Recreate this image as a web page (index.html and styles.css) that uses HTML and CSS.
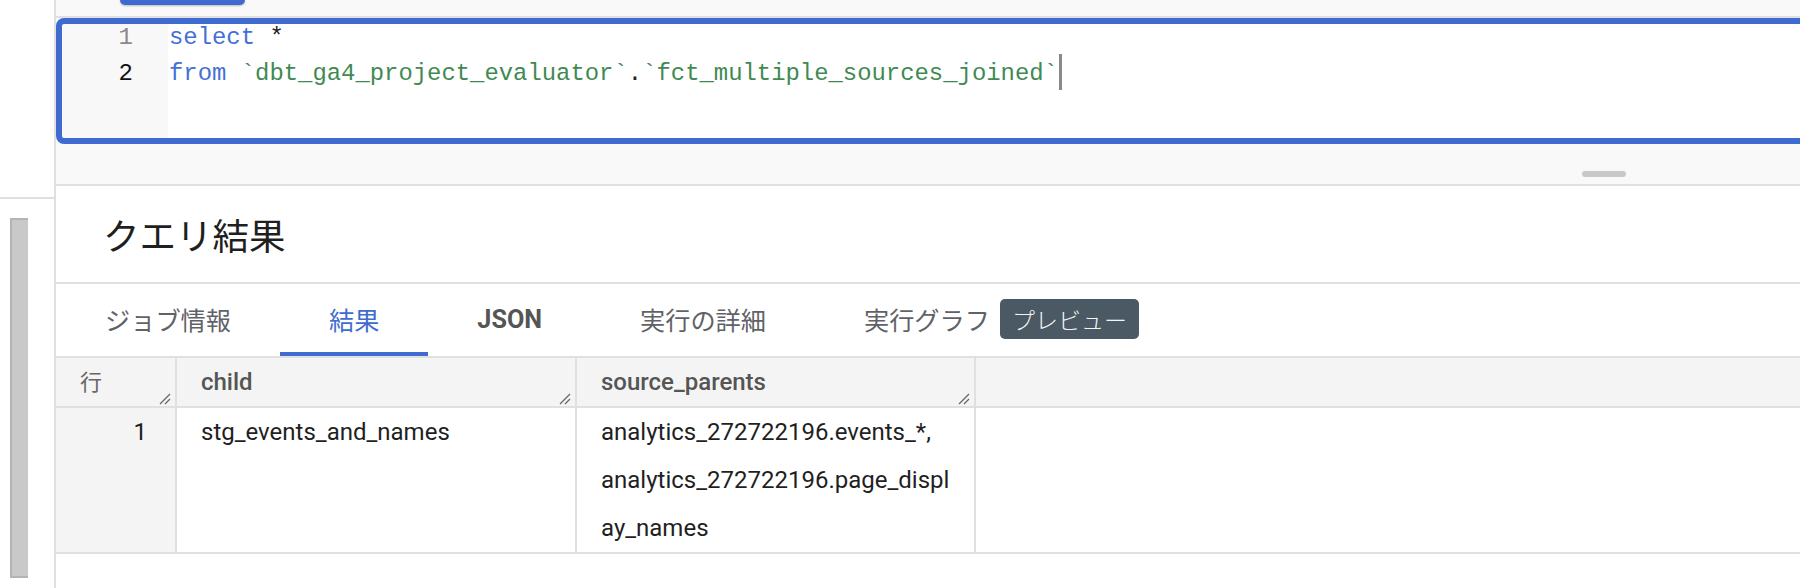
FILE: index.html
```html
<!DOCTYPE html>
<html lang="ja">
<head>
<meta charset="utf-8">
<title>クエリ結果</title>
<link rel="stylesheet" href="styles.css">
</head>
<body>
<div class="page">
  <aside class="sidebar">
    <div class="side-top"></div>
    <div class="side-scroll"><div class="scrollbar"></div></div>
  </aside>
  <main class="main">
    <div class="topbar"><div class="run-btn"></div></div>
    <div class="editor">
      <div class="gutter">
        <div class="ln">1</div>
        <div class="ln active">2</div>
      </div>
      <div class="code">
        <div class="cl"><span class="kw">select</span> <span class="op">*</span></div>
        <div class="cl"><span class="kw">from</span> <span class="str">`dbt_ga4_project_evaluator`</span><span class="op">.</span><span class="str">`fct_multiple_sources_joined`</span><span class="cursor"></span></div>
      </div>
    </div>
    <div class="editor-foot"><div class="handle"></div></div>
    <div class="title">クエリ結果</div>
    <nav class="tabs">
      <div class="tab">ジョブ情報</div>
      <div class="tab active">結果</div>
      <div class="tab bold">JSON</div>
      <div class="tab">実行の詳細</div>
      <div class="tab">実行グラフ<span class="badge">プレビュー</span></div>
    </nav>
    <div class="table">
      <div class="trow head">
        <div class="cell c0"><span class="htext light">行</span><svg class="grip" width="12" height="12" viewBox="0 0 12 12"><path d="M1 11 L11 1 M6 11 L11 6" stroke="#666" stroke-width="1.3" fill="none"/></svg></div>
        <div class="cell c1"><span class="htext">child</span><svg class="grip" width="12" height="12" viewBox="0 0 12 12"><path d="M1 11 L11 1 M6 11 L11 6" stroke="#666" stroke-width="1.3" fill="none"/></svg></div>
        <div class="cell c2"><span class="htext">source_parents</span><svg class="grip" width="12" height="12" viewBox="0 0 12 12"><path d="M1 11 L11 1 M6 11 L11 6" stroke="#666" stroke-width="1.3" fill="none"/></svg></div>
        <div class="cell c3"></div>
      </div>
      <div class="trow body">
        <div class="cell c0 num">1</div>
        <div class="cell c1 data">stg_events_and_names</div>
        <div class="cell c2 data">analytics_272722196.events_*, analytics_272722196.page_display_names</div>
        <div class="cell c3 blank"></div>
      </div>
    </div>
  </main>
</div>
</body>
</html>
```
FILE: styles.css
```css
* { box-sizing: border-box; }
html, body { margin: 0; padding: 0; }
body {
  width: 1800px;
  height: 588px;
  overflow: hidden;
  background: #fff;
  font-family: Roboto, "Noto Sans CJK JP", sans-serif;
  color: #202124;
}
.page { display: flex; height: 588px; }

.sidebar {
  width: 56px;
  flex: none;
  border-right: 2px solid #e0e0e0;
  display: flex;
  flex-direction: column;
}
.side-top { height: 199px; border-bottom: 2px solid #e0e0e0; flex: none; }
.side-scroll { padding: 19px 0 0 10px; }
.scrollbar {
  width: 18px;
  height: 360px;
  background: #c9c9c9;
  border-left: 2px solid #b4b4b4;
  border-top: 2px solid #b4b4b4;
  border-bottom: 2px solid #b4b4b4;
}

.main { flex: 1; display: flex; flex-direction: column; min-width: 0; }

.topbar {
  height: 18px;
  flex: none;
  background: #f9f9f9;
  border-bottom: 2px solid #e0e0e0;
  padding-left: 64px;
}
.run-btn {
  width: 125px;
  height: 5px;
  background: #3f6bd0;
  border-radius: 0 0 8px 8px;
  box-shadow: 0 1px 2px rgba(0,0,0,0.25);
}

.editor {
  position: relative;
  height: 126px;
  flex: none;
  display: flex;
  background: #fff;
}
.editor::after {
  content: "";
  position: absolute;
  left: 0; top: 0; bottom: 0; right: -20px;
  border: 6px solid #3f6bd0;
  border-radius: 8px;
  pointer-events: none;
}
.gutter {
  width: 112px;
  flex: none;
  background: #f8f8f8;
  padding: 2px 35px 0 0;
  text-align: right;
  font-family: "Liberation Mono", "DejaVu Sans Mono", monospace;
  font-size: 24px;
  line-height: 36px;
  color: #8a8a8a;
}
.ln { height: 36px; }
.ln.active { color: #111; }
.code {
  flex: 1;
  padding: 2px 0 0 1px;
  font-family: "Liberation Mono", "DejaVu Sans Mono", monospace;
  font-size: 23.9px;
  line-height: 36px;
  color: #333;
}
.cl { height: 36px; white-space: pre; }
.kw { color: #4470d6; }
.str { color: #3f8a52; }
.op { color: #222; }
.cursor {
  display: inline-block;
  width: 3px;
  height: 36px;
  background: #8a8a8a;
  margin-left: 1px;
  vertical-align: top;
  position: relative;
  top: -2px;
}

.editor-foot {
  height: 42px;
  flex: none;
  background: #f9f9f9;
  border-bottom: 2px solid #e0e0e0;
  padding: 27px 0 0 1526px;
}
.handle {
  width: 44px;
  height: 6px;
  border-radius: 3px;
  background: #c8c8c8;
}

.title {
  height: 98px;
  flex: none;
  border-bottom: 2px solid #e0e0e0;
  padding-left: 47px;
  display: flex;
  align-items: center;
  font-family: "Noto Sans CJK JP", sans-serif;
  font-size: 36.5px;
  font-weight: 400;
  color: #1f1f1f;
}

.tabs {
  height: 72px;
  flex: none;
  display: flex;
}
.tab {
  display: flex;
  align-items: center;
  padding: 2px 49px 0;
  border-bottom: 4px solid transparent;
  font-family: Roboto, "Noto Sans CJK JP", sans-serif;
  font-size: 25.2px;
  color: #5f6368;
}
.tab.active { color: #3f6bd0; border-bottom-color: #3f6bd0; }
.tab.bold { font-weight: 700; color: #555; }
.badge {
  margin-left: 10px;
  height: 40px;
  padding: 0 12px;
  border-radius: 5px;
  background: #4a5963;
  color: #f4f4f4;
  font-size: 23px;
  font-weight: 300;
  display: flex;
  align-items: center;
}

.table { border-top: 2px solid #e0e0e0; }
.trow { display: flex; border-bottom: 2px solid #e0e0e0; }
.trow.head { height: 50px; background: #f4f4f4; }
.trow.body { height: 146px; }
.cell { border-right: 2px solid #e0e0e0; flex: none; }
.c0 { width: 121px; }
.c1 { width: 400px; }
.c2 { width: 399px; }
.c3 { flex: 1; border-right: none; }
.head .cell {
  display: flex;
  justify-content: space-between;
  padding-left: 24px;
  padding-right: 4px;
}
.htext {
  line-height: 48px;
  font-size: 24px;
  font-weight: 500;
  color: #555;
}
.htext.light { font-weight: 400; color: #666; font-family: "Noto Sans CJK JP", sans-serif; font-size: 22px; line-height: 44px; }
.grip { align-self: flex-end; margin-bottom: 1px; }
.num {
  background: #f4f4f4;
  text-align: right;
  padding-right: 28px;
  font-size: 24px;
  line-height: 48px;
  color: #202124;
}
.data {
  padding: 0 21px 0 24px;
  font-size: 24px;
  line-height: 48px;
  color: #1f1f1f;
  overflow-wrap: anywhere;
}
```
